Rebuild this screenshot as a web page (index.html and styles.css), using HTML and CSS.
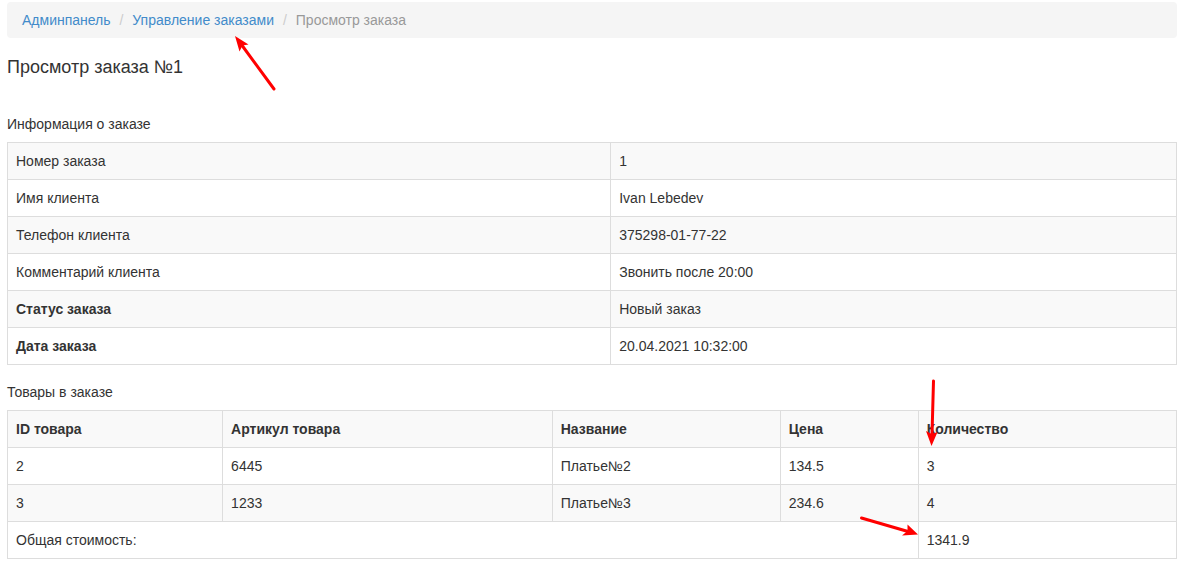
FILE: index.html
```html
<!DOCTYPE html>
<html lang="ru">
<head>
<meta charset="utf-8">
<meta name="viewport" content="width=device-width, initial-scale=1">
<title>Просмотр заказа №1</title>
<link rel="stylesheet" href="styles.css">
</head>
<body>
<main class="page">
  <nav aria-label="Навигация">
    <ol class="breadcrumb">
      <li><a href="#">Админпанель</a></li>
      <li class="marked"><a href="#">Управление заказами</a>
        <svg class="arrow arrow-link" width="44" height="56" viewBox="0 0 44 56" aria-hidden="true">
          <path class="arrow-line" d="M6 8 L39 53"/>
          <path class="arrow-head" d="M0 0 L13.5 8.5 L7.5 9.5 L4.5 15.5 Z"/>
        </svg>
      </li>
      <li class="active">Просмотр заказа</li>
    </ol>
  </nav>

  <h1 class="title">Просмотр заказа №1</h1>

  <h2 class="subtitle">Информация о заказе</h2>
  <table class="table">
    <tbody>
      <tr><td>Номер заказа</td><td>1</td></tr>
      <tr><td>Имя клиента</td><td>Ivan Lebedev</td></tr>
      <tr><td>Телефон клиента</td><td>375298-01-77-22</td></tr>
      <tr><td>Комментарий клиента</td><td>Звонить после 20:00</td></tr>
      <tr><td><b>Статус заказа</b></td><td>Новый заказ</td></tr>
      <tr><td><b>Дата заказа</b></td><td>20.04.2021 10:32:00</td></tr>
    </tbody>
  </table>

  <h2 class="subtitle">Товары в заказе</h2>
  <table class="table">
    <colgroup>
      <col class="col-id">
      <col class="col-article">
      <col class="col-name">
      <col class="col-price">
      <col class="col-quantity">
    </colgroup>
    <tbody>
      <tr>
        <th>ID товара</th>
        <th>Артикул товара</th>
        <th>Название</th>
        <th>Цена</th>
        <th class="marked">Количество
          <svg class="arrow arrow-quantity" width="16" height="68" viewBox="0 0 16 68" aria-hidden="true">
            <path class="arrow-line" d="M8.5 1 L7 55"/>
            <path class="arrow-head" d="M6.5 66 L1 51 L6.8 54 L12.5 52 Z"/>
          </svg>
        </th>
      </tr>
      <tr><td>2</td><td>6445</td><td>Платье№2</td><td>134.5</td><td>3</td></tr>
      <tr><td>3</td><td>1233</td><td>Платье№3</td><td>234.6</td><td>4</td></tr>
      <tr>
        <td colspan="4">Общая стоимость:</td>
        <td class="marked">1341.9
          <svg class="arrow arrow-total" width="60" height="24" viewBox="0 0 60 24" aria-hidden="true">
            <path class="arrow-line" d="M2.5 2 L49 15.5"/>
            <path class="arrow-head" d="M59 18.5 L48.5 8.5 L48.5 15 L43 19.5 Z"/>
          </svg>
        </td>
      </tr>
    </tbody>
  </table>
</main>
</body>
</html>
```
FILE: styles.css
```css
* {
  box-sizing: border-box;
}

body {
  margin: 0;
  font-family: "Liberation Sans", Arial, sans-serif;
  font-size: 14px;
  line-height: 20px;
  color: #333;
  background: #fff;
}

.page {
  padding: 2px 4px 0 7px;
}

.breadcrumb {
  display: flex;
  flex-wrap: wrap;
  margin: 0 0 19px;
  padding: 8px 15px;
  list-style: none;
  background: #f5f5f5;
  border-radius: 4px;
}

.breadcrumb li + li::before {
  content: "/\00a0";
  padding: 0 5px 0 9px;
  color: #ccc;
}

.breadcrumb a {
  color: #428bca;
  text-decoration: none;
}

.breadcrumb a:hover {
  text-decoration: underline;
}

.breadcrumb .active {
  color: #999;
}

.title {
  margin: 0 0 40px;
  font-size: 18px;
  font-weight: 400;
  line-height: 20px;
}

.subtitle {
  margin: 0 0 10px;
  font-size: 14px;
  font-weight: 400;
  line-height: 15px;
}

.table {
  width: 100%;
  margin: 0 0 20px;
  border: 1px solid #ddd;
  border-collapse: collapse;
}

.table th,
.table td {
  padding: 8px;
  border: 1px solid #ddd;
  text-align: left;
  vertical-align: top;
}

.table tr:nth-child(odd) {
  background: #f9f9f9;
}

.col-id {
  width: 18.4%;
}

.col-article {
  width: 28.2%;
}

.col-name {
  width: 19.5%;
}

.col-price {
  width: 11.8%;
}

.col-quantity {
  width: 22.1%;
}

.marked {
  position: relative;
}

.arrow {
  position: absolute;
  z-index: 1;
  overflow: visible;
  pointer-events: none;
}

.arrow-line {
  fill: none;
  stroke: #f00;
  stroke-width: 3;
  stroke-linecap: round;
}

.arrow-head {
  fill: #f00;
}

.arrow-link {
  right: -5px;
  top: 26px;
}

.arrow-quantity {
  left: 6px;
  top: -31px;
}

.arrow-total {
  left: -60px;
  top: -6px;
}
```
